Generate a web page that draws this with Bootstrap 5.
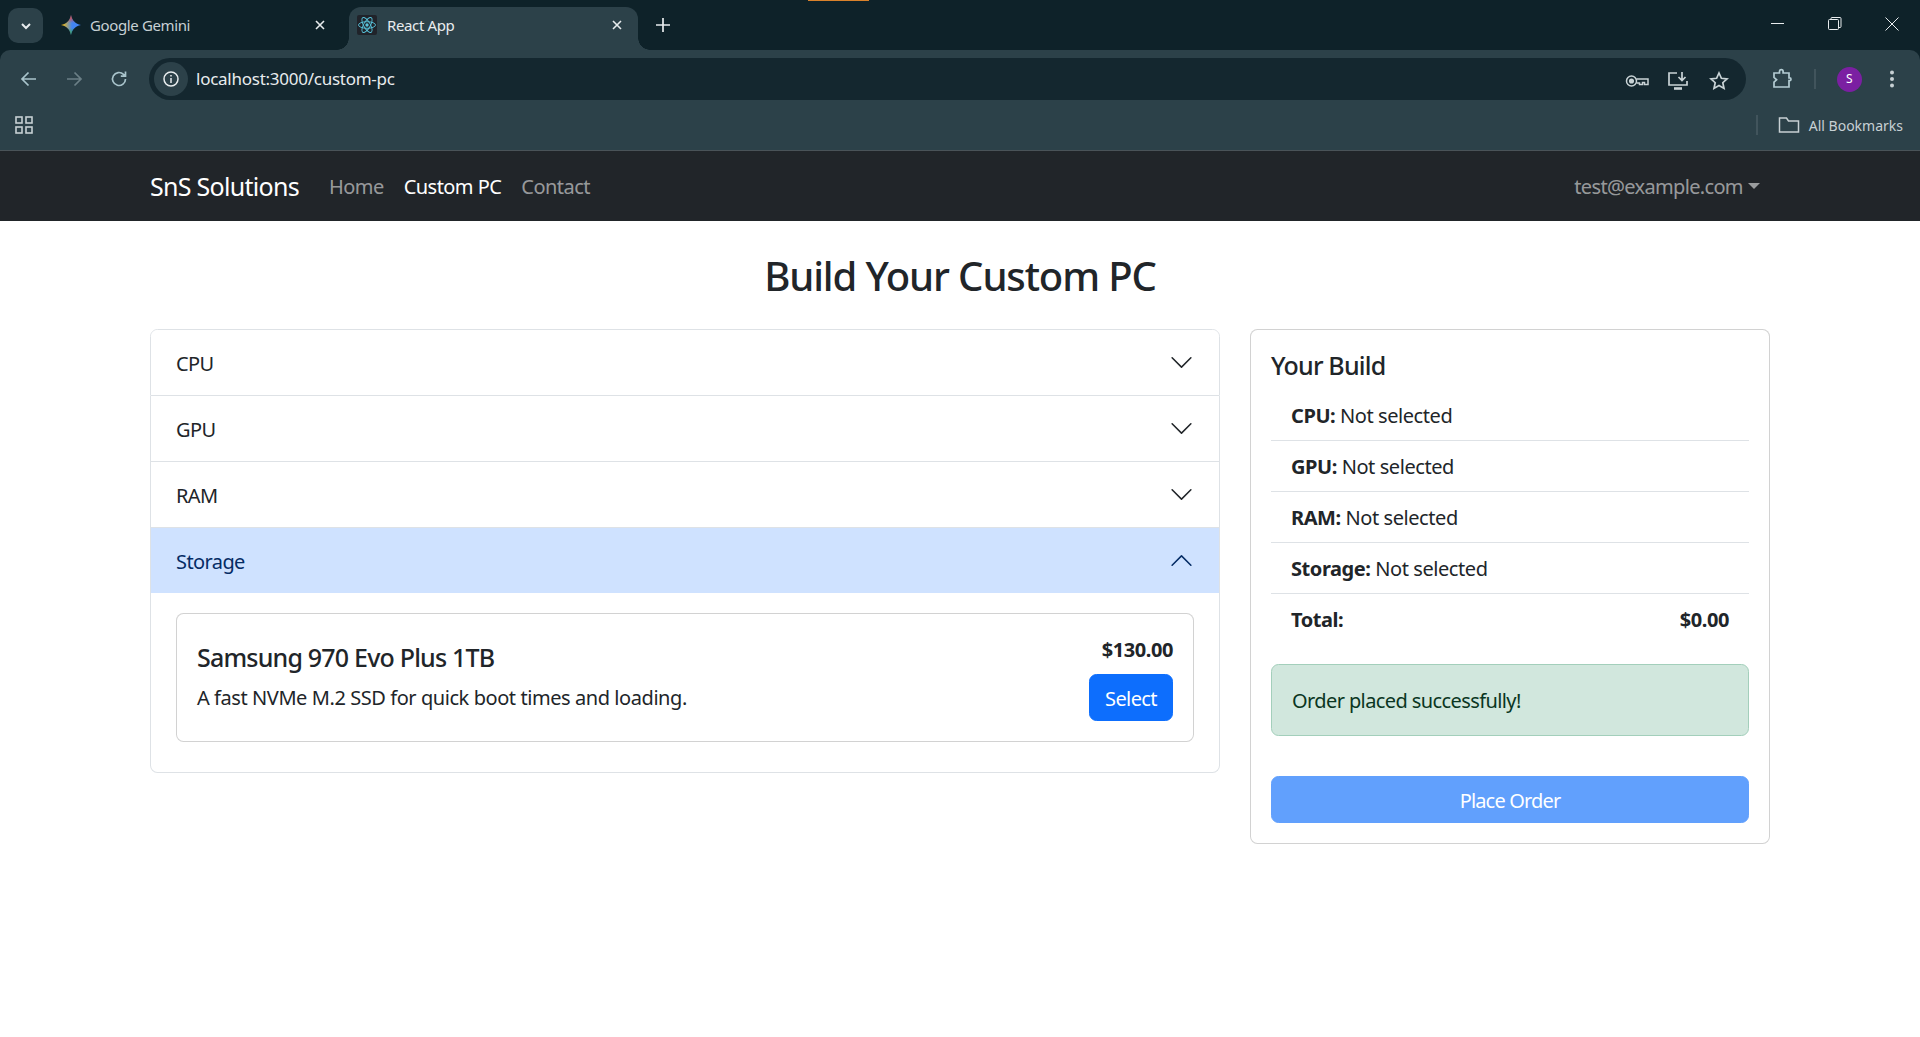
<!DOCTYPE html>
<html lang="en">
<head>
  <meta charset="UTF-8" />
  <meta name="viewport" content="width=device-width, initial-scale=1.0">
  <title>React App</title>
  <link rel="stylesheet" href="https://cdn.jsdelivr.net/npm/bootstrap@5.3.0/dist/css/bootstrap.min.css" />
  <style>
    /* page was captured at 125% zoom, so the rem base is 20px */
    html { font-size: 20px; }
    body { font-family: "Noto Sans", "Open Sans", sans-serif; letter-spacing: -0.0215em; color: #212529; background: #fff; }
    .container { max-width: 1650px; }
    .navbar-brand { font-weight: 400; letter-spacing: -0.0285em; padding-top: calc(.3125rem + 1px); padding-bottom: calc(.3125rem - 1px); }
    .navbar .nav-link { letter-spacing: -0.027em; padding-top: calc(.5rem + 1px); padding-bottom: calc(.5rem - 1px); }
    .navbar .dropdown-toggle { letter-spacing: -0.033em; }
    .pc-heading { font-size: 40px; font-weight: 500; letter-spacing: -0.028em; padding-top: 1px; margin-bottom: calc(1.5rem - 1px); }
    .card-title { letter-spacing: -0.032em; }
    /* text sits 1px lower in the original font, nudge it inside the same box */
    .btn { letter-spacing: -0.042em; padding-top: calc(.375rem + 1px); padding-bottom: calc(.375rem - 1px); }
    .pc-select { letter-spacing: -0.03em; }
    .list-group-item { padding-top: calc(.5rem + 1px); padding-bottom: calc(.5rem - 1px); }
    .alert-success { color: #0a3622; letter-spacing: -0.03em; padding-top: calc(1rem + 1px); padding-bottom: calc(1rem - 1px); }
    .pc-desc { padding-top: 1px; margin-bottom: -1px; }
    .pc-price { padding-top: 1px; margin-bottom: calc(.5rem - 1px); }
    .accordion-button { letter-spacing: -0.03em; padding-top: calc(1rem + 1px); padding-bottom: calc(1rem - 1px); }
    .accordion-button::after { margin-top: -1px; margin-bottom: 1px; }
    .accordion-button:not(.collapsed) { background: #cfe2ff; color: #052c65; box-shadow: none; }
    .accordion-button:not(.collapsed)::after { background-image: url("data:image/svg+xml,%3csvg xmlns='http://www.w3.org/2000/svg' viewBox='0 0 16 16' fill='%23052c65'%3e%3cpath fill-rule='evenodd' d='M1.646 4.646a.5.5 0 0 1 .708 0L8 10.293l5.646-5.647a.5.5 0 0 1 .708.708l-6 6a.5.5 0 0 1-.708 0l-6-6a.5.5 0 0 1 0-.708z'/%3e%3c/svg%3e"); }
    .accordion-button:focus { box-shadow: none; }

    /* browser frame */
    .br-frame { font-size: 15px; color: #c7d0d4; letter-spacing: -0.025em; position: relative; background: #0e2229; }
    .br-strip { height: 50px; background: #0e2229; padding: 7px 0 0 8px; }
    .br-drop { width: 35px; height: 35px; margin-top: 1px; border-radius: 10px; background: #2c4149; }
    .br-tab { width: 289px; height: 43px; padding: 0 15px 7px 8px; margin-left: 1px; border-radius: 12px 12px 0 0; gap: 10px; position: relative; }
    .br-tab-first { width: 304px; padding-left: 17px; padding-right: 22px; gap: 9px; }
    .br-tab-on { background: #2c4149; color: #e8ecee; }
    .br-tab-on::before, .br-tab-on::after { content: ""; position: absolute; bottom: 0; width: 12px; height: 12px; }
    .br-tab-on::before { left: -12px; background: radial-gradient(circle at 0 0, transparent 11.5px, #2c4149 12px); }
    .br-tab-on::after { right: -12px; background: radial-gradient(circle at 100% 0, transparent 11.5px, #2c4149 12px); }
    .br-tab-text { flex: 1; white-space: nowrap; }
    .br-new { width: 50px; height: 36px; }
    .br-top-mark { position: absolute; top: 0; left: 808px; width: 61px; height: 1px; background: #d9822b; }
    .br-win { width: 57px; height: 34px; }
    .br-bar { height: 101px; background: #2c4149; border-bottom: 1px solid #4a5358; border-radius: 10px 10px 0 0; }
    .br-row1 { height: 50px; padding: 8px 0 0 6px; }
    .br-nav-ico { width: 45px; height: 42px; }
    .br-omni { width: 1597px; height: 42px; margin-left: 8px; border-radius: 21px; background: #14272f; padding-left: 5px; font-size: 17px; letter-spacing: -0.015em; color: #e8ecee; }
    .br-info { width: 34px; height: 34px; border-radius: 50%; background: #2c4149; margin-right: 8px; }
    .br-omni-text { flex: 1; }
    .br-omni-ico { width: 41px; }
    .br-star-slot { margin-right: 7px; }
    .br-ext { width: 64px; margin-left: 4px; }
    .br-profile { width: 66px; }
    .br-menu { width: 20px; }
    .br-avatar { width: 25px; height: 25px; border-radius: 50%; background: #7b1fa2; color: #fff; font-size: 12px; }
    .br-sep { width: 2px; height: 20px; background: #41545c; }
    .br-row2 { height: 50px; padding: 0 17px 0 14px; font-size: 14px; letter-spacing: 0; }
    .br-folder { margin: 0 9px 0 20px; }
  </style>
</head>
<body>
  <!-- browser frame -->
  <div class="br-frame">
    <div class="br-top-mark"></div>
    <div class="br-strip d-flex align-items-start">
      <div class="br-drop d-flex align-items-center justify-content-center">
        <svg width="12" height="12" viewBox="0 0 12 12" fill="none" stroke="#e8ecee" stroke-width="2"><path d="M2 4l4 4 4-4"/></svg>
      </div>
      <div class="br-tab br-tab-first d-flex align-items-center">
        <svg width="20" height="20" viewBox="0 0 20 20">
          <defs>
            <linearGradient id="gemH" x1="0" y1="0" x2="1" y2="0"><stop offset=".05" stop-color="#fbbc04"/><stop offset=".55" stop-color="#4285f4"/><stop offset="1" stop-color="#4285f4"/></linearGradient>
            <linearGradient id="gemV" x1="0" y1="0" x2="0" y2="1"><stop offset=".05" stop-color="#ea4335"/><stop offset=".4" stop-color="#ea4335" stop-opacity="0"/><stop offset=".65" stop-color="#34a853" stop-opacity="0"/><stop offset=".95" stop-color="#34a853"/></linearGradient>
          </defs>
          <path d="M10 0c.8 5.200 4.400 9 10 10-5.600 1-9.200 4.800-10 10-.8-5.200-4.400-9-10-10 5.600-1 9.200-4.800 10-10z" fill="url(#gemH)"/>
          <path d="M10 0c.8 5.200 4.400 9 10 10-5.600 1-9.200 4.800-10 10-.8-5.200-4.400-9-10-10 5.600-1 9.200-4.800 10-10z" fill="url(#gemV)"/>
        </svg>
        <span class="br-tab-text">Google Gemini</span>
        <svg width="12" height="12" viewBox="0 0 12 12" stroke="#e8ecee" stroke-width="1.600"><path d="M2 2l8 8M10 2l-8 8"/></svg>
      </div>
      <div class="br-tab br-tab-on d-flex align-items-center">
        <svg width="20" height="20" viewBox="0 0 20 20" fill="none" stroke="#58c4dc" stroke-width=".9">
          <rect width="20" height="20" rx="2" fill="#20232a" stroke="none"/>
          <circle cx="10" cy="10" r="1.700" fill="#58c4dc" stroke="none"/>
          <ellipse cx="10" cy="10" rx="8.500" ry="3.300"/>
          <ellipse cx="10" cy="10" rx="8.500" ry="3.300" transform="rotate(60 10 10)"/>
          <ellipse cx="10" cy="10" rx="8.500" ry="3.300" transform="rotate(120 10 10)"/>
        </svg>
        <span class="br-tab-text">React App</span>
        <svg width="12" height="12" viewBox="0 0 12 12" stroke="#e8ecee" stroke-width="1.600"><path d="M2 2l8 8M10 2l-8 8"/></svg>
      </div>
      <div class="br-new d-flex align-items-center justify-content-center">
        <svg width="14" height="14" viewBox="0 0 14 14" stroke="#e8ecee" stroke-width="1.700"><path d="M7 0v14M0 7h14"/></svg>
      </div>
      <div class="flex-grow-1"></div>
      <div class="br-win d-flex align-items-center justify-content-center">
        <svg width="14" height="14" viewBox="0 0 14 14" stroke="#e8ecee"><path d="M0 6.500h13"/></svg>
      </div>
      <div class="br-win d-flex align-items-center justify-content-center">
        <svg width="14" height="14" viewBox="0 0 14 14" fill="none" stroke="#e8ecee"><rect x=".5" y="2.500" width="10" height="10" rx="1"/><path d="M3 2.500V1.500a1 1 0 0 1 1-1h8a1 1 0 0 1 1 1v8a1 1 0 0 1-1 1h-1.500"/></svg>
      </div>
      <div class="br-win d-flex align-items-center justify-content-center">
        <svg width="14" height="14" viewBox="0 0 14 14" stroke="#e8ecee"><path d="M.5.500l13 13M13.500.500l-13 13"/></svg>
      </div>
    </div>
    <div class="br-bar">
      <div class="br-row1 d-flex align-items-center">
        <div class="br-nav-ico d-flex align-items-center justify-content-center">
          <svg width="18" height="18" viewBox="0 0 18 18" fill="none" stroke="#a9c4cc" stroke-width="1.700"><path d="M16 9H2.500M8.500 2.500L2 9l6.500 6.500"/></svg>
        </div>
        <div class="br-nav-ico d-flex align-items-center justify-content-center">
          <svg width="18" height="18" viewBox="0 0 18 18" fill="none" stroke="#6b7f86" stroke-width="1.700"><path d="M2 9h13.500M9.500 2.500L16 9l-6.500 6.500"/></svg>
        </div>
        <div class="br-nav-ico d-flex align-items-center justify-content-center">
          <svg width="18" height="18" viewBox="0 0 18 18" fill="none" stroke="#a9c4cc" stroke-width="1.700"><path d="M15.500 9a6.500 6.500 0 1 1-2-4.700L15.500 6.200M15.500 1.500v4.700h-4.700"/></svg>
        </div>
        <div class="br-omni d-flex align-items-center">
          <div class="br-info d-flex align-items-center justify-content-center">
            <svg width="18" height="18" viewBox="0 0 18 18" fill="none" stroke="#e8ecee" stroke-width="1.500"><circle cx="9" cy="9" r="7"/><path d="M9 8v5M9 5v1.500"/></svg>
          </div>
          <span class="br-omni-text">localhost:3000/custom-pc</span>
          <div class="br-omni-ico text-center">
            <svg width="24" height="16" viewBox="0 0 24 16" fill="none" stroke="#c9d3d6" stroke-width="1.500"><circle cx="6.500" cy="8" r="5"/><circle cx="6.500" cy="8" r="1.800" fill="#c9d3d6"/><path d="M11.500 6H23v5.500h-3.500V9.500h-2v2H14.500V10H11.500"/></svg>
          </div>
          <div class="br-omni-ico text-center">
            <svg width="22" height="20" viewBox="0 0 22 20" fill="none" stroke="#c9d3d6" stroke-width="1.700"><path d="M10 2H2v12h18v-4"/><path d="M7 17.500h8" stroke-width="2.600"/><path d="M15 1v8M11.500 6l3.500 3.500L18.500 6"/></svg>
          </div>
          <div class="br-omni-ico br-star-slot text-center">
            <svg width="20" height="20" viewBox="0 0 20 20" fill="none" stroke="#c9d3d6" stroke-width="1.700"><path d="M10 2l2.400 5.300 5.600.6-4.200 3.800 1.200 5.700L10 14.500l-5 2.900 1.200-5.700L2 7.900l5.600-.6z"/></svg>
          </div>
        </div>
        <div class="br-ext d-flex align-items-center justify-content-center">
          <svg width="22" height="22" viewBox="0 0 22 22" fill="none" stroke="#b4ccd3" stroke-width="1.700"><path d="M3 5h5.500V3.500a1.800 1.800 0 0 1 3.600 0V5H18v4.800h.6a1.400 1.400 0 0 1 0 2.800H18V19H3v-4.800l2.600-2.400L3 9.400z"/></svg>
        </div>
        <div class="br-sep"></div>
        <div class="br-profile d-flex align-items-center justify-content-center">
          <div class="br-avatar d-flex align-items-center justify-content-center">S</div>
        </div>
        <div class="br-menu d-flex align-items-center justify-content-center">
          <svg width="6" height="18" viewBox="0 0 6 18" fill="#c7d0d4"><circle cx="3" cy="2.500" r="2"/><circle cx="3" cy="9" r="2"/><circle cx="3" cy="15.500" r="2"/></svg>
        </div>
      </div>
      <div class="br-row2 d-flex align-items-center">
        <svg width="20" height="18" viewBox="0 0 20 18" fill="none" stroke="#c7d0d4" stroke-width="1.600"><rect x="2" y="1" width="6" height="6"/><rect x="12" y="1" width="6" height="6"/><rect x="2" y="11" width="6" height="6"/><rect x="12" y="11" width="6" height="6"/></svg>
        <div class="flex-grow-1"></div>
        <div class="br-sep"></div>
        <svg class="br-folder" width="22" height="18" viewBox="0 0 22 18" fill="none" stroke="#c7d0d4" stroke-width="1.500"><path d="M1.500 16V2h7l2 3h10v11z"/></svg>
        <span>All Bookmarks</span>
      </div>
    </div>
  </div>

  <nav class="navbar navbar-expand-lg navbar-dark bg-dark">
    <div class="container">
      <a class="navbar-brand" href="#">SnS Solutions</a>
      <ul class="navbar-nav me-auto">
        <li class="nav-item"><a class="nav-link" href="#">Home</a></li>
        <li class="nav-item"><a class="nav-link active" href="#">Custom PC</a></li>
        <li class="nav-item"><a class="nav-link" href="#">Contact</a></li>
      </ul>
      <ul class="navbar-nav">
        <li class="nav-item dropdown"><a class="nav-link dropdown-toggle" href="#" data-bs-toggle="dropdown">test@example.com</a></li>
      </ul>
    </div>
  </nav>

  <div class="container mt-4">
    <h2 class="pc-heading text-center">Build Your Custom PC</h2>
    <div class="row">
      <div class="col-8">
        <div class="accordion" id="parts">
          <div class="accordion-item">
            <h2 class="accordion-header"><button class="accordion-button collapsed" type="button" data-bs-toggle="collapse" data-bs-target="#p1">CPU</button></h2>
            <div id="p1" class="accordion-collapse collapse" data-bs-parent="#parts"></div>
          </div>
          <div class="accordion-item">
            <h2 class="accordion-header"><button class="accordion-button collapsed" type="button" data-bs-toggle="collapse" data-bs-target="#p2">GPU</button></h2>
            <div id="p2" class="accordion-collapse collapse" data-bs-parent="#parts"></div>
          </div>
          <div class="accordion-item">
            <h2 class="accordion-header"><button class="accordion-button collapsed" type="button" data-bs-toggle="collapse" data-bs-target="#p3">RAM</button></h2>
            <div id="p3" class="accordion-collapse collapse" data-bs-parent="#parts"></div>
          </div>
          <div class="accordion-item">
            <h2 class="accordion-header"><button class="accordion-button" type="button" data-bs-toggle="collapse" data-bs-target="#p4">Storage</button></h2>
            <div id="p4" class="accordion-collapse collapse show" data-bs-parent="#parts">
              <div class="accordion-body">
                <div class="card mb-2">
                  <div class="card-body d-flex justify-content-between align-items-center">
                    <div>
                      <h5 class="card-title">Samsung 970 Evo Plus 1TB</h5>
                      <p class="card-text pc-desc">A fast NVMe M.2 SSD for quick boot times and loading.</p>
                    </div>
                    <div class="text-end">
                      <div class="fw-bold pc-price">$130.00</div>
                      <button class="btn btn-primary pc-select">Select</button>
                    </div>
                  </div>
                </div>
              </div>
            </div>
          </div>
        </div>
      </div>
      <div class="col-4">
        <div class="card">
          <div class="card-body">
            <h5 class="card-title">Your Build</h5>
            <ul class="list-group list-group-flush">
              <li class="list-group-item"><strong>CPU:</strong> Not selected</li>
              <li class="list-group-item"><strong>GPU:</strong> Not selected</li>
              <li class="list-group-item"><strong>RAM:</strong> Not selected</li>
              <li class="list-group-item"><strong>Storage:</strong> Not selected</li>
              <li class="list-group-item d-flex justify-content-between fw-bold"><span>Total:</span><span>$0.00</span></li>
            </ul>
            <div class="alert alert-success mt-3" role="alert">Order placed successfully!</div>
            <button class="btn btn-primary w-100 mt-3" disabled>Place Order</button>
          </div>
        </div>
      </div>
    </div>
  </div>
  <script src="https://cdn.jsdelivr.net/npm/bootstrap@5.3.0/dist/js/bootstrap.bundle.min.js"></script>
</body>
</html>
